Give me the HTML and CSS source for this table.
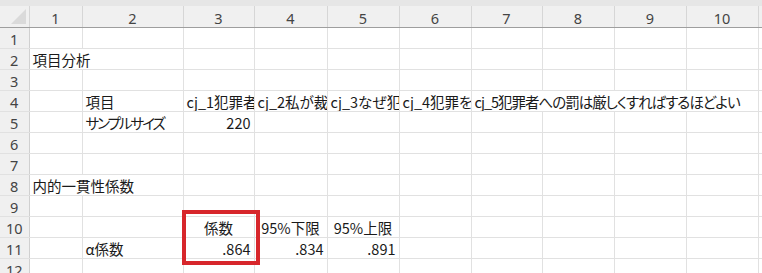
FILE: index.html
```html
<!DOCTYPE html>
<html>
<head>
    <meta charset="utf-8">
    <title>項目分析</title>
    <link rel="stylesheet" href="styles.css">
</head>
<body>
    <div class="ribbon-edge"></div>
    <div class="sheet">
        <table class="grid">
            <colgroup>
                <col class="c-head">
                <col class="c1"><col class="c2"><col class="c3"><col class="c4"><col class="c5">
                <col class="c6"><col class="c7"><col class="c8"><col class="c9"><col class="c10">
                <col class="c-rest">
            </colgroup>
            <tr class="col-heads">
                <th class="corner"><span class="select-all"></span></th>
                <th>1</th><th>2</th><th>3</th><th>4</th><th>5</th>
                <th>6</th><th>7</th><th>8</th><th>9</th><th>10</th><th></th>
            </tr>
            <tr><th>1</th><td></td><td></td><td></td><td></td><td></td><td></td><td></td><td></td><td></td><td></td><td></td></tr>
            <tr><th>2</th><td class="spill" colspan="2">項目分析</td><td></td><td></td><td></td><td></td><td></td><td></td><td></td><td></td><td></td></tr>
            <tr><th>3</th><td></td><td></td><td></td><td></td><td></td><td></td><td></td><td></td><td></td><td></td><td></td></tr>
            <tr>
                <th>4</th><td></td><td>項目</td>
                <td>cj_1犯罪者は社会から隔離すべきだ</td>
                <td>cj_2私が裁判員なら重い刑を科す</td>
                <td>cj_3なぜ犯罪をしたのかを考えるべきだ</td>
                <td>cj_4犯罪をした人も更生できる</td>
                <td class="spill kana" colspan="4">cj_5犯罪者への罰は厳しくすればするほどよい</td>
                <td></td>
            </tr>
            <tr><th>5</th><td></td><td class="kana-wide">サンプルサイズ</td><td class="num">220</td><td></td><td></td><td></td><td></td><td></td><td></td><td></td><td></td></tr>
            <tr><th>6</th><td></td><td></td><td></td><td></td><td></td><td></td><td></td><td></td><td></td><td></td><td></td></tr>
            <tr><th>7</th><td></td><td></td><td></td><td></td><td></td><td></td><td></td><td></td><td></td><td></td><td></td></tr>
            <tr><th>8</th><td class="spill" colspan="2">内的一貫性係数</td><td></td><td></td><td></td><td></td><td></td><td></td><td></td><td></td><td></td></tr>
            <tr><th>9</th><td></td><td></td><td></td><td></td><td></td><td></td><td></td><td></td><td></td><td></td><td></td></tr>
            <tr><th>10</th><td></td><td></td><td class="mid">係数</td><td class="mid">95%下限</td><td class="mid">95%上限</td><td></td><td></td><td></td><td></td><td></td><td></td></tr>
            <tr><th>11</th><td></td><td>α係数</td><td class="num">.864</td><td class="num">.834</td><td class="num">.891</td><td></td><td></td><td></td><td></td><td></td><td></td></tr>
            <tr><th>12</th><td></td><td></td><td></td><td></td><td></td><td></td><td></td><td></td><td></td><td></td><td></td></tr>
        </table>

        <!-- hand-drawn highlight around the alpha coefficient -->
        <div class="mark"></div>
    </div>
</body>
</html>
```

FILE: styles.css
```css
body {
    margin: 0;
    padding: 0;
    background-color: #ffffff;
    overflow: hidden;
}

.ribbon-edge {
    height: 6px;
    background-color: #e6e6e6;
}

.sheet {
    position: relative;
}

.grid {
    border-collapse: collapse;
    table-layout: fixed;
    width: 780px;
    font-family: "Noto Sans CJK JP", sans-serif;
    font-feature-settings: "palt";
    font-size: 14.5px;
    color: #1a1a1a;
}

.c-head { width: 29px; }
.c1 { width: 53px; }
.c2 { width: 101px; }
.c3 { width: 71px; }
.c4 { width: 73px; }
.c5 { width: 72px; }
.c6 { width: 72px; }
.c7 { width: 71px; }
.c8 { width: 72px; }
.c9 { width: 72px; }
.c10 { width: 72px; }
.c-rest { width: 22px; }

.grid tr {
    height: 21px;
}

.grid td {
    border: 1px solid #e1e1e1;
    padding: 0 3px;
    line-height: 18px;
    vertical-align: bottom;
    white-space: nowrap;
    overflow: hidden;
}

/* kana run narrower than kanji in the sheet font */
.grid td.kana {
    letter-spacing: -1px;
}

.grid td.kana-wide {
    letter-spacing: -2px;
}

.grid th {
    background-color: #f0f0f0;
    border-right: 1px solid #d0d0d0;
    border-bottom: 1px solid #e1e1e1;
    padding: 0;
    font-family: "Noto Sans", "Open Sans", sans-serif;
    font-weight: normal;
    font-size: 14.5px;
    line-height: 18px;
    color: #444;
    text-align: center;
    vertical-align: bottom;
}

.col-heads th {
    border-right: 1px solid #d6d6d6;
    border-bottom: 1px solid #9e9e9e;
}

.corner {
    position: relative;
}

.select-all {
    position: absolute;
    right: 3px;
    bottom: 3px;
    width: 0;
    height: 0;
    border-left: 15px solid transparent;
    border-bottom: 15px solid #dadada;
}

.num {
    text-align: right;
}

.mid {
    text-align: center;
}

.mark {
    position: absolute;
    left: 182px;
    top: 204px;
    width: 70px;
    height: 47px;
    border: 4px solid #d7262b;
}
```
